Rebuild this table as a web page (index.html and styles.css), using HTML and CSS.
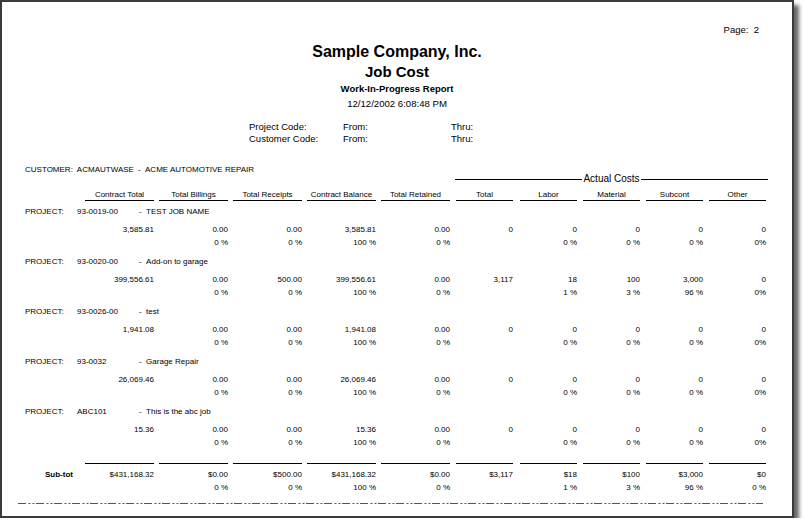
FILE: index.html
```html
<!DOCTYPE html>
<html>
<head>
<meta charset="utf-8">
<title>Job Cost - Work-In-Progress Report</title>
<link rel="stylesheet" href="styles.css">
</head>
<body>
<div class="page">
  <div class="pageno">Page:&nbsp; 2</div>
  <div class="title">Sample Company, Inc.</div>
  <div class="subtitle">Job Cost</div>
  <div class="report">Work-In-Progress Report</div>
  <div class="date">12/12/2002 6:08:48 PM</div>
  <div class="filters">
    <div class="frow"><span class="flabel">Project Code:</span><span class="ffrom">From:</span><span>Thru:</span></div>
    <div class="frow"><span class="flabel">Customer Code:</span><span class="ffrom">From:</span><span>Thru:</span></div>
  </div>

  <div class="grid top">
    <div class="customer"><span>CUSTOMER:</span><span>ACMAUTWASE</span><span>- &nbsp;ACME AUTOMOTIVE REPAIR</span></div>
    <div class="group"><span class="gline"></span><span class="gtext">Actual Costs</span><span class="gline"></span></div>
  </div>

  <div class="grid heads">
    <div class="hd first">Contract Total</div>
    <div class="hd">Total Billings</div>
    <div class="hd">Total Receipts</div>
    <div class="hd">Contract Balance</div>
    <div class="hd">Total Retained</div>
    <div class="hd s">Total</div>
    <div class="hd s">Labor</div>
    <div class="hd s">Material</div>
    <div class="hd s">Subcont</div>
    <div class="hd s">Other</div>
  </div>

  <div class="project">
    <div class="prow"><span class="plabel">PROJECT:</span><span class="pcode">93-0019-00</span><span>- &nbsp;TEST JOB NAME</span></div>
    <div class="grid vals"><div></div><div>3,585.81</div><div>0.00</div><div>0.00</div><div>3,585.81</div><div>0.00</div><div>0</div><div>0</div><div>0</div><div>0</div><div>0</div></div>
    <div class="grid pcts"><div></div><div></div><div>0 %</div><div>0 %</div><div>100 %</div><div>0 %</div><div></div><div>0 %</div><div>0 %</div><div>0 %</div><div>0%</div></div>
  </div>

  <div class="project">
    <div class="prow"><span class="plabel">PROJECT:</span><span class="pcode">93-0020-00</span><span>- &nbsp;Add-on to garage</span></div>
    <div class="grid vals"><div></div><div>399,556.61</div><div>0.00</div><div>500.00</div><div>399,556.61</div><div>0.00</div><div>3,117</div><div>18</div><div>100</div><div>3,000</div><div>0</div></div>
    <div class="grid pcts"><div></div><div></div><div>0 %</div><div>0 %</div><div>100 %</div><div>0 %</div><div></div><div>1 %</div><div>3 %</div><div>96 %</div><div>0%</div></div>
  </div>

  <div class="project">
    <div class="prow"><span class="plabel">PROJECT:</span><span class="pcode">93-0026-00</span><span>- &nbsp;test</span></div>
    <div class="grid vals"><div></div><div>1,941.08</div><div>0.00</div><div>0.00</div><div>1,941.08</div><div>0.00</div><div>0</div><div>0</div><div>0</div><div>0</div><div>0</div></div>
    <div class="grid pcts"><div></div><div></div><div>0 %</div><div>0 %</div><div>100 %</div><div>0 %</div><div></div><div>0 %</div><div>0 %</div><div>0 %</div><div>0%</div></div>
  </div>

  <div class="project">
    <div class="prow"><span class="plabel">PROJECT:</span><span class="pcode">93-0032</span><span>- &nbsp;Garage Repair</span></div>
    <div class="grid vals"><div></div><div>26,069.46</div><div>0.00</div><div>0.00</div><div>26,069.46</div><div>0.00</div><div>0</div><div>0</div><div>0</div><div>0</div><div>0</div></div>
    <div class="grid pcts"><div></div><div></div><div>0 %</div><div>0 %</div><div>100 %</div><div>0 %</div><div></div><div>0 %</div><div>0 %</div><div>0 %</div><div>0%</div></div>
  </div>

  <div class="project">
    <div class="prow"><span class="plabel">PROJECT:</span><span class="pcode">ABC101</span><span>- &nbsp;This is the abc job</span></div>
    <div class="grid vals"><div></div><div>15.36</div><div>0.00</div><div>0.00</div><div>15.36</div><div>0.00</div><div>0</div><div>0</div><div>0</div><div>0</div><div>0</div></div>
    <div class="grid pcts"><div></div><div></div><div>0 %</div><div>0 %</div><div>100 %</div><div>0 %</div><div></div><div>0 %</div><div>0 %</div><div>0 %</div><div>0%</div></div>
  </div>

  <div class="grid sublines">
    <div class="sl first"></div><div class="sl"></div><div class="sl"></div><div class="sl"></div><div class="sl"></div>
    <div class="sl s"></div><div class="sl s"></div><div class="sl s"></div><div class="sl s"></div><div class="sl s"></div>
  </div>
  <div class="grid vals subtot"><div class="stlabel">Sub-tot</div><div>$431,168.32</div><div>$0.00</div><div>$500.00</div><div>$431,168.32</div><div>$0.00</div><div>$3,117</div><div>$18</div><div>$100</div><div>$3,000</div><div>$0</div></div>
  <div class="grid pcts"><div></div><div></div><div>0 %</div><div>0 %</div><div>100 %</div><div>0 %</div><div></div><div>1 %</div><div>3 %</div><div>96 %</div><div>0 %</div></div>

  <svg class="dashline" width="745" height="3" viewBox="0 0 745 3"><line x1="0" y1="1.5" x2="745" y2="1.5" stroke="#555" stroke-width="1" stroke-dasharray="8 2.5 2 2 2 1.5"/></svg>
</div>
</body>
</html>
```

FILE: styles.css
```css
html, body {
  margin: 0;
  padding: 0;
  background: #fff;
}

.page {
  width: 790px;
  height: 514px;
  border: 2px solid #3a3a3a;
  background: #fff;
  box-shadow: 5px 5px 4px rgba(0, 0, 0, 0.6);
  font-family: "Liberation Sans", Arial, sans-serif;
  color: #000;
  overflow: hidden;
}

.pageno {
  margin-top: 22px;
  padding-right: 33px;
  text-align: right;
  font-size: 9.5px;
  line-height: 12px;
  white-space: pre;
}

.title {
  margin-top: 7px;
  text-align: center;
  font-weight: bold;
  font-size: 16px;
  line-height: 18px;
}

.subtitle {
  margin-top: 2px;
  text-align: center;
  font-weight: bold;
  font-size: 15px;
  line-height: 18px;
}

.report {
  margin-top: 2px;
  text-align: center;
  font-weight: bold;
  font-size: 9.5px;
  line-height: 12px;
}

.date {
  margin-top: 3px;
  text-align: center;
  font-size: 9.6px;
  line-height: 12px;
}

.filters {
  margin-top: 11px;
  padding-left: 247px;
  font-size: 9.5px;
  line-height: 12px;
}

.frow {
  display: flex;
}

.flabel {
  width: 94px;
}

.ffrom {
  width: 108px;
}

.grid {
  display: grid;
  grid-template-columns: 60px 69px 74px 74px 74px 74px 63px 64px 63px 63px 63px;
  margin-left: 23px;
  font-size: 8px;
  line-height: 10px;
}

.top {
  margin-top: 20px;
  align-items: start;
}

.customer {
  grid-column: 1 / 7;
  display: flex;
  gap: 4px;
  white-space: nowrap;
}

.group {
  grid-column: 7 / 12;
  margin-top: 8px;
  margin-left: 5px;
  margin-right: -2px;
  display: flex;
  align-items: center;
  font-size: 10px;
  line-height: 11px;
}

.gline {
  flex: 1;
  height: 1px;
  background: #000;
  margin-top: 1px;
}

.gtext {
  padding: 0 1px;
}

.heads {
  margin-top: 5px;
}

.hd {
  justify-self: end;
  width: 69px;
  text-align: center;
  line-height: 11px;
  border-bottom: 1px solid #000;
  white-space: nowrap;
}

.hd.first {
  grid-column: 2;
}

.hd.s {
  width: 57px;
}

.project {
  margin-top: 9px;
}

.heads + .project {
  margin-top: 6px;
}

.prow {
  display: flex;
  margin-left: 23px;
  font-size: 8px;
  line-height: 10px;
  white-space: nowrap;
}

.plabel {
  width: 52px;
}

.pcode {
  width: 62px;
}

.vals {
  margin-top: 8px;
  text-align: right;
  white-space: nowrap;
}

.pcts {
  margin-top: 3px;
  text-align: right;
  white-space: nowrap;
}

.sublines {
  margin-top: 15px;
}

.sl {
  justify-self: end;
  width: 69px;
  height: 1px;
  background: #000;
}

.sl.first {
  grid-column: 2;
}

.sl.s {
  width: 57px;
}

.subtot {
  margin-top: 6px;
}

.stlabel {
  text-align: left;
  padding-left: 20px;
  font-weight: bold;
}

.dashline {
  display: block;
  margin-top: 9px;
  margin-left: 16px;
}
```
